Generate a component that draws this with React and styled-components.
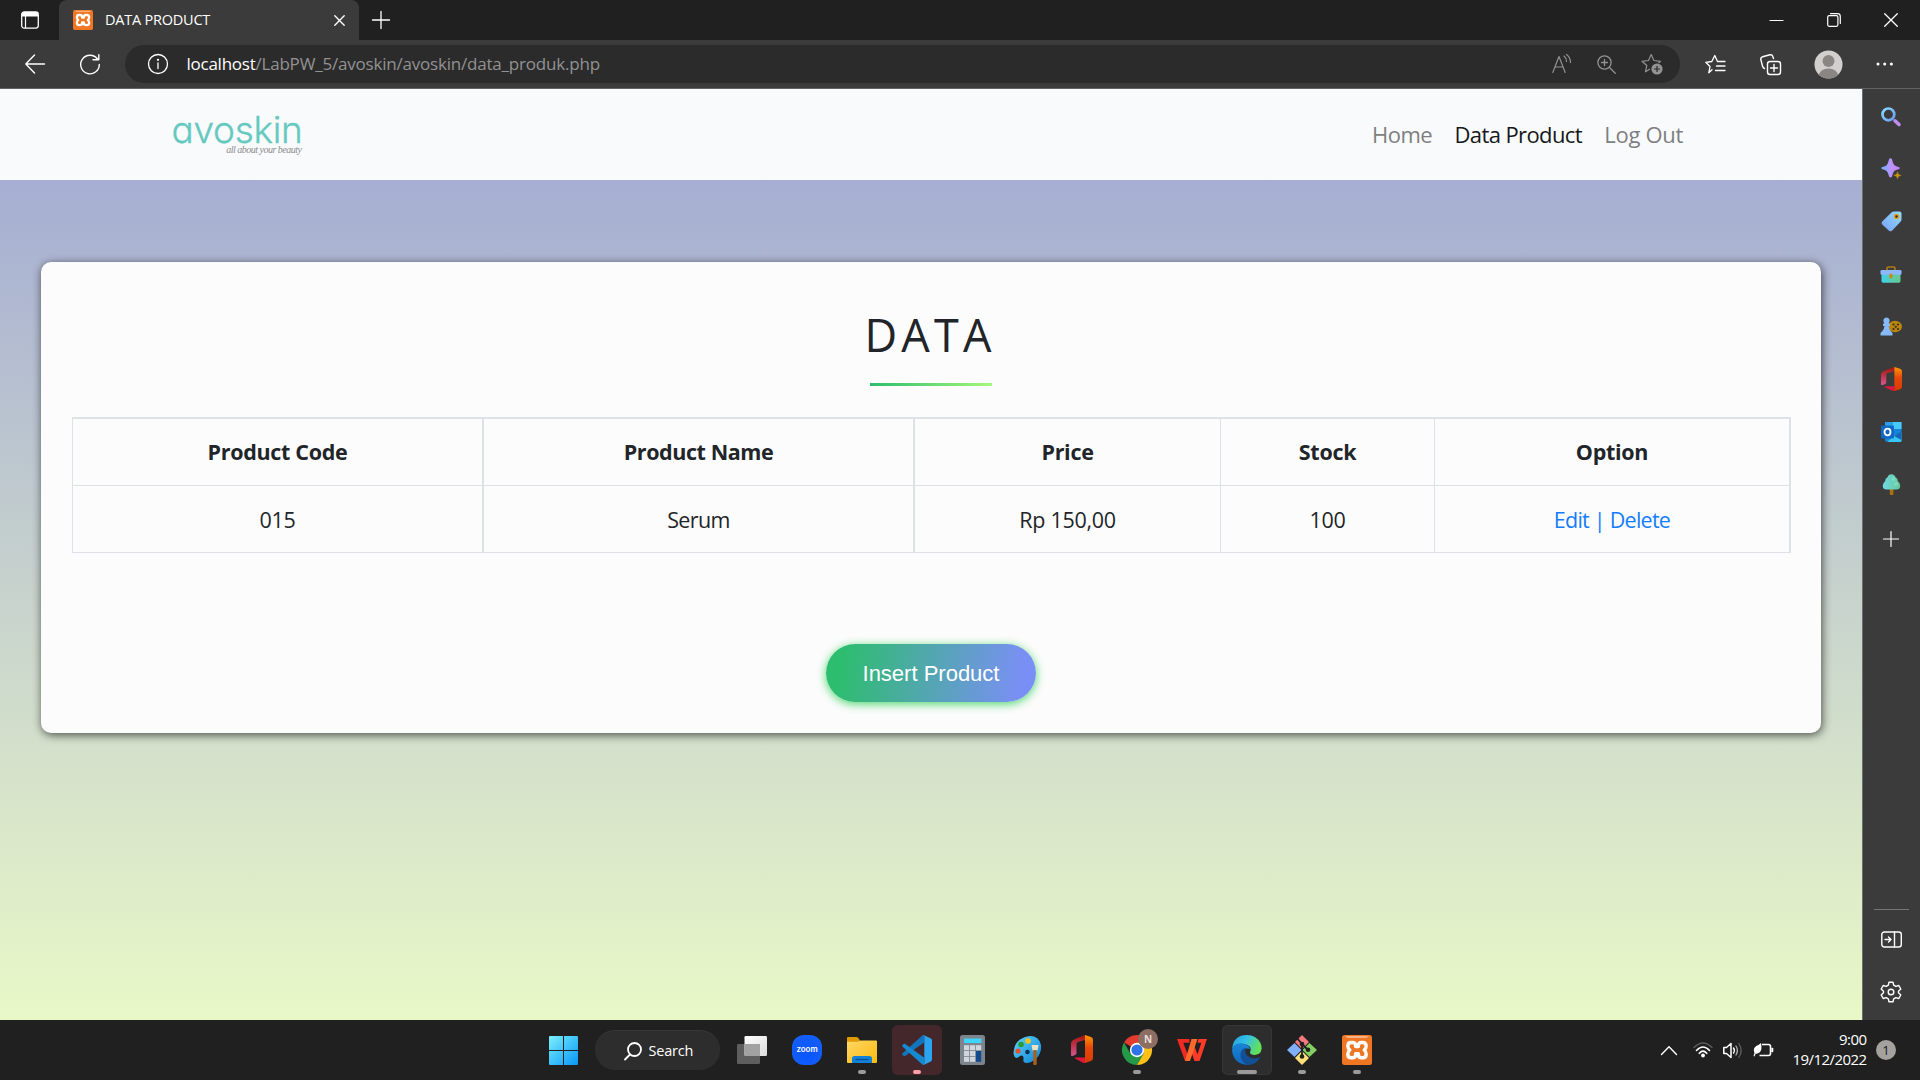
import React from "react";
import styled, { createGlobalStyle, css } from "styled-components";

const UI = '"Open Sans", "Noto Sans", sans-serif';

const Global = createGlobalStyle`
  * { box-sizing: border-box; }
  html, body { margin: 0; padding: 0; width: 1920px; height: 1080px; overflow: hidden; background: #202020; }
  body { font-family: ${UI}; }
  svg { display: block; flex: none; overflow: visible; }
`;

const Desktop = styled.div`
  width: 1920px;
  height: 1080px;
  display: flex;
  flex-direction: column;
`;

/* ---------- tab strip ---------- */
const TabStrip = styled.div`
  height: 40px;
  background: #202020;
  display: flex;
  align-items: stretch;
  color: #fff;
`;
const TabMenu = styled.div`
  width: 59px;
  display: flex;
  align-items: center;
  justify-content: center;
`;
const Tab = styled.div`
  width: 300px;
  background: #3b3b3b;
  border-radius: 8px 8px 0 0;
  display: flex;
  align-items: center;
  padding: 0 14px;
`;
const TabTitle = styled.span`
  margin-left: 12px;
  flex: 1;
  font-size: 14.5px;
  line-height: 20px;
  letter-spacing: -0.22px;
  white-space: nowrap;
`;
const NewTab = styled.div`
  width: 43px;
  display: flex;
  align-items: center;
  justify-content: center;
`;
const WindowButtons = styled.div`
  margin-left: auto;
  display: flex;
`;
const WindowButton = styled.div`
  width: 57.5px;
  display: flex;
  align-items: center;
  justify-content: center;
`;

/* ---------- toolbar ---------- */
const Toolbar = styled.div`
  height: 49px;
  background: #3b3b3b;
  border-bottom: 1px solid #636363;
  display: flex;
  align-items: center;
  color: #fff;
`;
const ToolSlot = styled.div`
  width: ${(p) => p.$w}px;
  display: flex;
  align-items: center;
  justify-content: center;
  flex: none;
`;
const AddressBar = styled.div`
  width: 1555px;
  height: 38px;
  border-radius: 19px;
  background: #2b2b2b;
  display: flex;
  align-items: center;
  padding-left: 21.5px;
  padding-right: 5.5px;
`;
const Url = styled.span`
  margin-left: 18px;
  flex: 1;
  font-size: 17px;
  line-height: 24px;
  letter-spacing: -0.2px;
  white-space: nowrap;
  color: #929292;
`;
const UrlHost = styled.span`
  color: #fff;
  letter-spacing: -0.25px;
`;

/* ---------- web page ---------- */
const Middle = styled.div`
  height: 931px;
  display: flex;
`;
const Page = styled.main`
  width: 1862px;
  display: flex;
  flex-direction: column;
  background: linear-gradient(#9fa6d4, #e9f8c7);
`;
const Navbar = styled.nav`
  height: 91px;
  background: #f8fafc;
  display: flex;
  justify-content: space-between;
  padding: 0 179px 0 171.5px;
`;
const Brand = styled.div`
  display: flex;
  flex-direction: column;
  width: 130px;
  padding-top: 18.5px;
`;
const BrandName = styled.span`
  font-family: Inter, "Open Sans", sans-serif;
  font-feature-settings: "cv11";
  font-weight: 300;
  font-size: 37px;
  line-height: 36px;
  padding-top: 4px;
  letter-spacing: -0.3px;
  color: #65c9c0;
  -webkit-text-stroke: 0.3px #65c9c0;
  white-space: nowrap;
`;
const BrandTag = styled.span`
  margin-top: -4px;
  font-family: "Liberation Serif", serif;
  font-style: italic;
  font-size: 10px;
  line-height: 12px;
  text-align: right;
  letter-spacing: -0.5px;
  color: #8d8d8d;
  white-space: nowrap;
`;
const NavLinks = styled.div`
  display: flex;
  align-items: center;
  gap: 22.3px;
  padding-bottom: 2px;
`;
const NavLink = styled.a`
  font-size: 22px;
  line-height: 30px;
  letter-spacing: ${(p) => p.$ls}px;
  color: ${(p) => (p.$active ? "#16181a" : "#7e7f81")};
  white-space: nowrap;
`;
const Card = styled.section`
  margin: 82px 41px 0;
  height: 471px;
  border-radius: 10px;
  background: #fcfcfc;
  box-shadow: 1px 2px 10px rgba(0, 0, 0, 0.65);
  padding: 43px 31px 0;
  display: flex;
  flex-direction: column;
  align-items: center;
`;
const Title = styled.h1`
  margin: 0 2px 0 0;
  font-weight: 400;
  font-size: 45px;
  line-height: 60px;
  letter-spacing: 4.2px;
  color: #212529;
`;
const Underline = styled.div`
  width: 122px;
  height: 3px;
  margin-top: 18px;
  background: linear-gradient(to right, #2dbd6e, #a6f77b);
`;
const Table = styled.div`
  align-self: stretch;
  margin-top: 31px;
  margin-right: -1px;
  height: 136px;
  display: grid;
  grid-template-columns: 412px 431px 306px 214px 356px;
  grid-template-rows: 68px 67px;
  border-top: 1px solid #dee2e6;
`;
const Cell = styled.div`
  display: flex;
  align-items: center;
  justify-content: center;
  border: 0 solid #dee2e6;
  border-bottom-width: 1px;
  border-top-width: ${(p) => (p.$head ? 1 : 0)}px;
  border-left-width: ${(p) => (p.$first ? 1 : 0)}px;
  border-right-width: ${(p) => p.$right}px;
  padding-bottom: ${(p) => (p.$head ? 1 : 0)}px;
  font-size: 21.5px;
  font-weight: ${(p) => (p.$head ? 700 : 400)};
  letter-spacing: ${(p) => p.$ls}px;
  color: ${(p) => (p.$link ? "#147dff" : "#212529")};
  white-space: pre;
`;
const InsertButton = styled.button`
  margin-top: 91px;
  width: 210px;
  height: 58px;
  flex: none;
  border: 0;
  padding: 1px 0 0;
  border-radius: 29px;
  background: linear-gradient(100deg, #2dbd6e 8%, #7a8ff5 92%);
  box-shadow: 0 2px 10px rgba(14, 201, 60, 0.75);
  color: #fff;
  font-family: "Liberation Sans", Arial, sans-serif;
  font-size: 22px;
`;

/* ---------- sidebar ---------- */
const Sidebar = styled.aside`
  width: 58px;
  background: #3b3b3b;
  border-left: 1px solid #6b6e6b;
  display: flex;
  flex-direction: column;
  align-items: center;
  padding: 1.3px 1px 2px 0;
  color: #fff;
`;
const SideSlot = styled.div`
  height: ${(p) => p.$h || 52.5}px;
  display: flex;
  align-items: center;
  justify-content: center;
`;
const SideDivider = styled.div`
  width: 35px;
  height: 1px;
  background: #767676;
  margin-top: auto;
  margin-bottom: 3px;
`;

/* ---------- taskbar ---------- */
const Taskbar = styled.footer`
  height: 60px;
  background: #202020;
  display: flex;
  align-items: center;
  justify-content: space-between;
  padding-left: 536px;
  padding-right: 24px;
  color: #fff;
`;
const TaskGroup = styled.div`
  display: flex;
  align-items: center;
`;
const TaskSlot = styled.div`
  width: 55px;
  height: 60px;
  display: flex;
  align-items: center;
  justify-content: center;
`;
const TaskTile = styled.div`
  width: 50px;
  height: 50px;
  border-radius: 6px;
  display: flex;
  flex-direction: column;
  align-items: center;
  padding-top: 10px;
  background: ${(p) => p.$bg || "transparent"};
  ${(p) => p.$outlined && css`box-shadow: inset 0 0 0 1px #363636;`}
`;
const Indicator = styled.div`
  width: ${(p) => p.$w || 8}px;
  height: 4px;
  border-radius: 2px;
  margin-top: 5px;
  flex: none;
  background: ${(p) => p.$c || "#9a9a9a"};
`;
const SearchPill = styled.div`
  width: 125px;
  height: 40px;
  margin: 0 4.5px 0 4px;
  border-radius: 20px;
  background: #2d2d2d;
  border-top: 1px solid #383838;
  display: flex;
  align-items: center;
  padding-left: 29px;
  gap: 6.5px;
  font-size: 14.5px;
  letter-spacing: -0.2px;
`;
const Tray = styled.div`
  display: flex;
  align-items: center;
`;
const Clock = styled.div`
  margin-left: 13px;
  width: 74px;
  text-align: right;
  font-size: 15px;
  line-height: 20px;
  letter-spacing: -0.55px;
  white-space: nowrap;
  padding-bottom: 2px;
`;
const Badge = styled.div`
  width: 20px;
  height: 20px;
  border-radius: 50%;
  margin-left: 9.5px;
  background: #a3a29f;
  color: #202020;
  font-size: 13px;
  display: flex;
  align-items: center;
  justify-content: center;
`;

/* ---------- icons ---------- */
const Line = ({ w = 24, h, sw = 1.3, c = "currentColor", children }) => (
  <svg width={w} height={h || w} viewBox={`0 0 ${w} ${h || w}`} fill="none" stroke={c} strokeWidth={sw} strokeLinecap="round" strokeLinejoin="round">
    {children}
  </svg>
);

const Xampp = ({ s }) => (
  <svg width={s} height={s} viewBox="0 0 30 30">
    <rect width="30" height="30" rx="2.5" fill="#ef7622" />
    <path d="M3 1 H27 L24.5 3 H5.5 Z" fill="#f7b184" />
    <path d="M10.5 7.5 H9.2 Q5.8 7.5 5.8 11 Q5.8 13.6 7.8 15 Q5.8 16.6 5.8 19.3 Q5.8 22.8 9.2 22.8 H10.5 Q13.6 22.8 13.6 19.5 V18.6 H16.4 V19.5 Q16.4 22.8 19.5 22.8 H20.8 Q24.2 22.8 24.2 19.3 Q24.2 16.6 22.2 15 Q24.2 13.6 24.2 11 Q24.2 7.5 20.8 7.5 H19.5 Q16.4 7.5 16.4 10.5 V11.5 H13.6 V10.5 Q13.6 7.5 10.5 7.5 Z" fill="none" stroke="#fff" strokeWidth="3.4" strokeLinejoin="round" />
  </svg>
);

const Office = ({ w, h, id }) => (
  <svg width={w} height={h} viewBox="0 0 22 28" preserveAspectRatio="none">
    <defs>
      <linearGradient id={id} x1="0" y1="0" x2="0" y2="1"><stop offset="0" stopColor="#ff9a00" /><stop offset=".45" stopColor="#e8470a" /><stop offset="1" stopColor="#d73b02" /></linearGradient>
      <linearGradient id={id + "b"} x1="0" y1="0" x2="0" y2="1"><stop offset="0" stopColor="#a3150c" /><stop offset="1" stopColor="#d8568f" /></linearGradient>
    </defs>
    <path d="M14 0 L4 4 Q0 5.5 0 9 V20 Q0 21.5 1.5 21 L4 20 Q5.5 19.4 5.5 18 V9 Q5.5 7.5 7 7 L14 5 Z" fill={`url(#${id}b)`} />
    <path d="M14 0 L20 2 Q22 2.7 22 5 V23 Q22 25.3 20 26 L14 28 Z" fill={`url(#${id})`} />
    <path d="M4 22.5 L13 22.5 H14 V28 Q12.5 28 11.5 27.4 L4 23.5 Z" fill="#e0163d" />
  </svg>
);

const SideIcons = [
  <svg width="20" height="20" viewBox="0 0 20 20">
    <defs><linearGradient id="sg" x1="0" y1="0" x2="1" y2="1"><stop offset="0" stopColor="#85dcfb" /><stop offset="1" stopColor="#6d9cf6" /></linearGradient></defs>
    <circle cx="7.4" cy="7.4" r="5.9" fill="none" stroke="url(#sg)" strokeWidth="2.7" />
    <path d="M14 13.8 L18 17.5" stroke="#c08df5" strokeWidth="3.6" strokeLinecap="round" />
  </svg>,
  <svg width="21" height="22" viewBox="0 0 21 22">
    <defs><linearGradient id="sp" x1="0" y1="0" x2="1" y2="0"><stop offset="0" stopColor="#6fb0ff" /><stop offset=".5" stopColor="#b894fb" /><stop offset="1" stopColor="#c97ef7" /></linearGradient></defs>
    <path d="M9.5 .3 Q10.6 .3 11 1.6 Q12 6 13.400 7.200 Q14.800 8.400 18.300 9.300 Q19.300 10.100 18.300 10.900 Q14.500 11.800 13.200 13 Q12 14.200 11 18.500 Q9.500 20.400 8.100 18.500 Q7 14.400 5.700 13.100 Q4.400 11.900 .8 10.900 Q-.2 10.100 .8 9.300 Q4.400 8.400 5.700 7.200 Q7 6 8 1.600 Q8.400 .3 9.500 .3Z" fill="url(#sp)" />
    <path d="M16.5 12.8 L17.9 16 L21.3 17.3 L17.9 18.700 L16.5 22 L15.100 18.700 L11.700 17.3 L15.100 16Z" fill="#c48f12" stroke="#3b3b3b" strokeWidth=".6" />
  </svg>,
  <svg width="21" height="21" viewBox="0 0 21 21">
    <defs><linearGradient id="tg" x1="0" y1="1" x2="1" y2="0"><stop offset="0" stopColor="#7aa0f8" /><stop offset="1" stopColor="#8edcfb" /></linearGradient></defs>
    <path d="M11 1 Q12 .5 13 .5 H18.5 Q20.5 .5 20.5 2.5 V8.5 Q20.5 9.7 19.7 10.5 L11 19.7 Q9.5 21 8 19.7 L1.2 13.5 Q-.2 12 1.2 10.5Z" fill="url(#tg)" />
    <circle cx="15.5" cy="5.5" r="2" fill="#203040" stroke="#f29a0c" strokeWidth="1.5" />
  </svg>,
  <svg width="22" height="17" viewBox="0 0 22 17">
    <defs><linearGradient id="bx" x1="0" y1="0" x2="1" y2="0"><stop offset="0" stopColor="#3fd0ea" /><stop offset="1" stopColor="#68c98c" /></linearGradient></defs>
    <path d="M7 5 V2.5 Q7 1 8.5 1 H13.5 Q15 1 15 2.5 V5" fill="none" stroke="#b07a12" strokeWidth="1.7" />
    <path d="M1.5 7 H20.5 V15 Q20.5 16.8 19 16.8 H3 Q1.5 16.8 1.5 15Z" fill="url(#bx)" />
    <rect x=".5" y="4" width="21" height="4.8" rx="1.2" fill="#8db7fb" />
    <rect x="9.3" y="7.6" width="3.4" height="4.8" rx="1.5" fill="#c48f12" />
  </svg>,
  <svg width="22" height="19" viewBox="0 0 22 19">
    <ellipse cx="15" cy="9.5" rx="7" ry="5.8" fill="#b8860f" />
    <g fill="#3b3210"><circle cx="13.5" cy="7.5" r="1.1" /><circle cx="18" cy="7.5" r="1.1" /><circle cx="15.8" cy="9.8" r="1.1" /><circle cx="13.5" cy="12" r="1.1" /><circle cx="18" cy="12" r="1.1" /></g>
    <path d="M6.5 .5 A3.2 3.2 0 0 1 8.7 6 L10 7 V9 H8.5 Q8.8 12 11 14.5 L12.5 16 V18.5 H.5 V16 L2 14.5 Q4.3 12 4.5 9 H3 V7 L4.3 6 A3.2 3.2 0 0 1 6.5 .5Z" fill="#86b9fa" />
  </svg>,
  <Office w={21} h={24} id="so" />,
  <svg width="21" height="20" viewBox="0 0 21 20">
    <rect x="4" y="0" width="16.5" height="19.5" rx="1" fill="#1683d8" />
    <rect x="4" y="0" width="8" height="7" fill="#2ba0ea" /><rect x="12" y="0" width="8.5" height="7" fill="#46c8fa" />
    <path d="M13 14 L20.5 10 V19 Q20.5 20 19 20 H6 Z" fill="#38c6f7" /><path d="M13 14 L20.5 9.5 V18Z" fill="#1566b5" />
    <rect x="0" y="3.5" width="13" height="13" rx="1.2" fill="#0f69c3" />
    <ellipse cx="6.5" cy="10" rx="3" ry="3.3" fill="none" stroke="#fff" strokeWidth="1.8" />
  </svg>,
  <svg width="19" height="21" viewBox="0 0 19 21">
    <defs><linearGradient id="tr" x1="0" y1="0" x2="1" y2="0"><stop offset="0" stopColor="#6fdbe8" /><stop offset="1" stopColor="#63c795" /></linearGradient></defs>
    <rect x="7.8" y="14" width="3.6" height="7" rx="1" fill="#a9720f" />
    <path d="M9.5 .3 Q12.5 .3 13.5 3.3 Q16 4.5 15.8 7.3 Q18.5 9 18.3 12 Q17.8 15.5 14.5 15.6 H4.5 Q1 15.5 .7 12 Q.7 9 3.2 7.3 Q3 4.5 5.5 3.3 Q6.5 .3 9.5 .3Z" fill="url(#tr)" />
    <circle cx="11.5" cy="5" r="2" fill="#8fe5cb" opacity=".6" /><circle cx="14" cy="10" r="2.2" fill="#8fe5cb" opacity=".5" />
  </svg>,
  <Line w={16} sw={1.2}><path d="M8 .5V15.5M.5 8H15.5" /></Line>,
];

const WinLogo = (
  <svg width="29" height="29" viewBox="0 0 29 29">
    <defs><linearGradient id="wl" gradientUnits="userSpaceOnUse" x1="0" y1="0" x2="29" y2="29"><stop offset="0" stopColor="#7cf0fc" /><stop offset=".5" stopColor="#3fc2fb" /><stop offset="1" stopColor="#0a96f5" /></linearGradient></defs>
    <path d="M0 1 Q0 0 1 0H14V14H0Z M15 0H28Q29 0 29 1V14H15Z M0 15H14V29H1Q0 29 0 28Z M15 15H29V28Q29 29 28 29H15Z" fill="url(#wl)" />
  </svg>
);
const TaskView = (
  <svg width="30" height="28" viewBox="0 0 30 28">
    <defs><linearGradient id="tv" x1="0" y1="0" x2="1" y2="1"><stop offset="0" stopColor="#fff" /><stop offset="1" stopColor="#dcdcdc" /></linearGradient></defs>
    <rect x="0" y="8" width="23" height="20" rx="1.2" fill="#5e5e5e" />
    <rect x="7.5" y="0" width="22.5" height="20" rx="1.2" fill="url(#tv)" />
    <path d="M7.5 8H23V20H8.5Q7.5 20 7.5 19Z" fill="#a2a2a2" />
  </svg>
);
const ZoomLogo = styled.div`
  width: 30px;
  height: 30px;
  border-radius: 12px;
  background: radial-gradient(circle at 50% 60%, #0a55ff, #1762f5);
  color: #fff;
  font: 600 8px/28px Inter, sans-serif;
  letter-spacing: -0.05px;
  text-align: center;
`;
const Folder = (
  <svg width="30" height="30" viewBox="0 0 30 30">
    <defs><linearGradient id="fo" x1="0" y1="0" x2="1" y2="1"><stop offset="0" stopColor="#ffd866" /><stop offset="1" stopColor="#fbb90c" /></linearGradient></defs>
    <path d="M0 8V3Q0 2 1 2H9.5Q10.5 2 11.3 3L13 5.5V9Z" fill="#dd9b04" />
    <path d="M0 6.8H11L13.5 5.4H29Q30 5.4 30 6.4V27Q30 28 29 28H1Q0 28 0 27Z" fill="url(#fo)" />
    <path d="M5 28V23.5Q5 21 7.5 21H22.5Q25 21 25 23.5V28Z" fill="#1180d6" />
    <path d="M8.5 24.5H21.5" stroke="#0a4f93" strokeWidth="1.2" />
  </svg>
);
const VSCode = (
  <svg width="30" height="30" viewBox="0 0 30 30">
    <path d="M20 .7 L.6 18.2 Q-.3 19.1 .6 20 L1.6 20.9 Q2.3 21.5 3.2 20.9 L22 7.5 V.3 Z" fill="#1274bd" />
    <path d="M20 29.3 L.6 11.8 Q-.3 10.9 .6 10 L1.6 9.1 Q2.3 8.5 3.2 9.1 L22 22.5 V29.7 Z" fill="#158ad3" />
    <path d="M20 .7 Q20.8 -.2 22 .3 L28.9 3.6 Q30 4.2 30 5.4 V24.6 Q30 25.8 28.9 26.4 L22 29.7 Q20.8 30.2 20 29.3 Q22.3 30.5 22.3 28 V2 Q22.3 -.5 20 .7Z" fill="#2ba4ef" />
  </svg>
);
const Calc = (
  <svg width="25" height="30" viewBox="0 0 25 30">
    <rect width="25" height="30" rx="2.5" fill="#7c848d" />
    <rect x="4" y="3.5" width="17.5" height="4.5" fill="#3fd4fb" />
    <g fill="#cfd6dd">
      {[10.2, 16, 21.8].map((y) => [4, 10, 16].map((x) => (x === 16 && y > 11 ? null : <rect key={x + "-" + y} x={x} y={y} width="5.2" height="5" />)))}
    </g>
    <rect x="16" y="16" width="5.2" height="10.8" fill="#134a8c" />
  </svg>
);
const Paint = (
  <svg width="29" height="30" viewBox="0 0 29 30">
    <defs><linearGradient id="pa" x1="0" y1="0" x2="1" y2="1"><stop offset="0" stopColor="#5fd6fb" /><stop offset="1" stopColor="#0c82d9" /></linearGradient></defs>
    <path d="M17 1 Q26 1 28 10 Q29 18 23 24 Q17 28.5 13 28 Q9.5 27.5 10.5 24 Q11 20 8 20.5 L4 23 Q1 23 .5 18 Q1 9 7 4.5 Q12 1 17 1Z" fill="url(#pa)" />
    <circle cx="15" cy="6" r="2.8" fill="#f7c21b" /><circle cx="8" cy="9.5" r="2.8" fill="#2b9c2f" /><circle cx="5" cy="16" r="2.6" fill="#e5532c" /><circle cx="14.5" cy="17" r="2.3" fill="#10324f" />
    <path d="M18.5 10H25.5L24.5 15.5H19.5Z" fill="#efe0c4" /><rect x="20.3" y="15" width="3.4" height="15" rx="1" fill="#a8611c" />
  </svg>
);
const ProfileInitial = styled.text`
  font: 700 10px "Open Sans", sans-serif;
  fill: #e8dfdb;
`;
const Chrome = (
  <svg width="30" height="30" viewBox="0 0 30 30">
    <path d="M2 7.5 A15 15 0 0 1 28 7.5 H15 L15 15Z" fill="#e33b2e" />
    <path d="M2 7.5 A15 15 0 0 0 15 30 L21.5 18.7 L15 15 L8.5 18.7Z" fill="#249a48" />
    <path d="M28 7.5 A15 15 0 0 1 15 30 L21.5 18.7 Q23 12 15 7.5Z" fill="#fbc116" />
    <circle cx="15" cy="15" r="7.2" fill="#fff" /><circle cx="15" cy="15" r="5.6" fill="#2f73e8" />
    <circle cx="26" cy="4" r="10" fill="#8d6e63" />
    <ProfileInitial x="26" y="7.6" textAnchor="middle">N</ProfileInitial>
  </svg>
);
const Wps = (
  <svg width="30" height="30" viewBox="0 0 30 30">
    <path d="M0 4 H12.5 V7.8 H6.3 L10.5 19 L9.5 26 H8 Z" fill="#f02a22" />
    <path d="M30 4 L22.5 26 H17.5 L14.5 17.5 L17 10 L20.5 19.5 L24.3 7.8 H20.5 L21.5 4 Z" fill="#ff3a26" />
    <path d="M14.5 4 H20.5 L13 26 H8 Z" fill="#ff6a2b" />
  </svg>
);
const Edge = (
  <svg width="30" height="30" viewBox="0 0 30 30">
    <defs>
      <linearGradient id="e1" x1="0" y1="0" x2="1" y2=".4"><stop offset="0" stopColor="#1f9fe0" /><stop offset=".5" stopColor="#35c1e6" /><stop offset="1" stopColor="#63e05a" /></linearGradient>
      <linearGradient id="e2" x1="0" y1="0" x2="0" y2="1"><stop offset="0" stopColor="#1a86d8" /><stop offset="1" stopColor="#0f68bd" /></linearGradient>
    </defs>
    <path d="M.2 13.5 Q1.5 0 15 0 Q24 0 28.5 8 Q31.5 15 27 18.8 Q23 21 18.8 19 Q17.3 18 18.3 16.5 Q20 12 15.5 10 Q6 6.5 .2 13.5Z" fill="url(#e1)" />
    <path d="M0 15 Q1 8.3 8.5 8.3 Q16 8.3 18.5 14.5 Q16.5 13 14.5 13.5 Q12 14 12.5 17 Q13 22 17.5 30 Q1 29.5 0 15Z" fill="url(#e2)" />
    <path d="M14 12.7 Q12 17 15.5 20.8 Q20.5 25.5 28.3 22 Q24.3 30 15.5 30 Q7.5 26 8.5 18.5 Q9.5 13.5 14 12.7Z" fill="#124f94" />
  </svg>
);
const Git = (
  <svg width="30" height="30" viewBox="0 0 30 30">
    <path d="M15 0 L22 7 L15 14 L8 7Z" fill="#f5797c" /><path d="M7.5 8 L14.5 15 L7.5 22 L0 15Z" fill="#81b0fb" />
    <path d="M22.5 8 L30 15 L22.5 22 L15.5 15Z" fill="#85cf62" /><path d="M15 16 L22 23 L15 30 L8 23Z" fill="#fbe078" />
    <path d="M10 3 L15 9 V21 M15 9 L20.5 14.5" stroke="#202020" strokeWidth="1.8" fill="none" />
    <circle cx="15" cy="9" r="2.3" fill="#202020" /><circle cx="15" cy="21.5" r="2.3" fill="#202020" /><circle cx="21" cy="14.8" r="2.3" fill="#202020" />
  </svg>
);

const TASKS = [
  { icon: <ZoomLogo>zoom</ZoomLogo> },
  { icon: Folder, run: true },
  { icon: VSCode, run: true, bg: "#44272a", c: "#ff9ea6" },
  { icon: Calc },
  { icon: Paint },
  { icon: <Office w={22} h={28} id="to" /> },
  { icon: Chrome, run: true },
  { icon: Wps },
  { icon: Edge, run: true, bg: "#2d2d2d", w: 20, outlined: true },
  { icon: Git, run: true },
  { icon: <Xampp s={30} />, run: true },
];

const HEAD = [
  { t: "Product Code", ls: -0.3 },
  { t: "Product Name", ls: -0.42 },
  { t: "Price", ls: -0.3 },
  { t: "Stock", ls: -0.3 },
  { t: "Option", ls: -0.3 },
];
const ROW = [
  { t: "015", ls: -0.3 },
  { t: "Serum", ls: -0.6 },
  { t: "Rp 150,00", ls: -0.3 },
  { t: "100", ls: -0.3 },
  { t: "Edit | Delete", ls: -0.75, link: true },
];
const RIGHT = [2, 2, 1, 1, 2];

export default function App() {
  return (
    <Desktop>
      <Global />
      <TabStrip>
        <TabMenu>
          <svg width="18" height="18" viewBox="0 0 18 18"><rect x=".7" y=".9" width="16.6" height="16.2" rx="2.5" fill="none" stroke="#fff" strokeWidth="1.3" /><path d="M1 5.5V3.5Q1 1 3.5 1H14.5Q17 1 17 3.5V5.5Z" fill="#fff" /><path d="M4.5 5V17" stroke="#fff" strokeWidth="1.2" /></svg>
        </TabMenu>
        <Tab>
          <Xampp s={20} />
          <TabTitle>DATA PRODUCT</TabTitle>
          <Line w={11} sw={1.4}><path d="M.8 .8L10.2 10.2M10.2 .8L.8 10.2" /></Line>
        </Tab>
        <NewTab><Line w={18} sw={1.3}><path d="M9 .5V17.5M.5 9H17.5" /></Line></NewTab>
        <WindowButtons>
          <WindowButton><Line w={13} sw={1.2}><path d="M0 6.5H13" /></Line></WindowButton>
          <WindowButton><Line w={14} sw={1.2}><rect x=".7" y="2.7" width="10.2" height="10.6" rx="1.5" /><path d="M3.5 .6H10.5Q13.3 .6 13.3 3.4V10.5" /></Line></WindowButton>
          <WindowButton><Line w={14} sw={1.3}><path d="M.7 .7L13.3 13.3M13.3 .7L.7 13.3" /></Line></WindowButton>
        </WindowButtons>
      </TabStrip>

      <Toolbar>
        <ToolSlot $w={69}><Line w={20} sw={1.4}><path d="M9.5 1L.8 10L9.5 19M.8 10H19.5" /></Line></ToolSlot>
        <ToolSlot $w={41}><Line w={20} sw={1.4}><path d="M17.5 5A9.3 9.3 0 1 0 19.3 10.5M18.8 .8V5.8H13" /></Line></ToolSlot>
        <ToolSlot $w={15} />
        <AddressBar>
          <Line w={22} sw={1.3}><circle cx="11" cy="11" r="9.5" /><path d="M11 10V15.5" /><circle cx="11" cy="6.8" r=".5" fill="#fff" /></Line>
          <Url><UrlHost>localhost</UrlHost>/LabPW_5/avoskin/avoskin/data_produk.php</Url>
          <ToolSlot $w={44}>
            <Line w={20} sw={1.2} c="#929292"><path d="M.8 18.500L7 2.500L13.2 18.500M3 13H11M12 2Q14.5 4 14.5 7.5M14.5 .5Q18.5 3.5 18.5 8.5" /></Line>
          </ToolSlot>
          <ToolSlot $w={45}>
            <Line w={19} sw={1.3} c="#929292"><circle cx="7.5" cy="7.5" r="6.6" /><path d="M12.5 12.5L18.3 18.3M7.5 4.5V10.5M4.5 7.5H10.5" /></Line>
          </ToolSlot>
          <ToolSlot $w={46}>
            <svg width="22" height="22" viewBox="0 0 22 22"><path d="M9 16L4.5 18.8L5.8 12.5L1 8.3L7.5 7.5L10.2 1.5L12.9 7.5L19.5 8.3L17.5 10" fill="none" stroke="#929292" strokeWidth="1.2" strokeLinejoin="round" /><circle cx="16" cy="16" r="5.6" fill="#929292" /><path d="M16 13V19M13 16H19" stroke="#2b2b2b" strokeWidth="1.2" /></svg>
          </ToolSlot>
        </AddressBar>
        <ToolSlot $w={7} />
        <ToolSlot $w={56}><Line w={21} sw={1.3}><path d="M7 15.8L3.8 18.8L5 12.5L.8 8.3L6.8 7.5L9.8 1.5L12.5 7.5H20M11.5 12H20M10.5 16.5H20" /></Line></ToolSlot>
        <ToolSlot $w={54}><Line w={21} sw={1.4}><rect x="7.5" y="7.5" width="13" height="13" rx="2.5" /><path d="M14 10.5V17.5M10.5 14H17.5M4.5 14.5Q3 14 2.5 12L.8 5.5Q.5 3.5 2.5 2.8L10 .8Q12.3 .5 12.8 2.5L13.5 4.5" /></Line></ToolSlot>
        <ToolSlot $w={62}>
          <svg width="29" height="29" viewBox="0 0 29 29"><defs><clipPath id="av"><circle cx="14.5" cy="14.5" r="14" /></clipPath></defs><circle cx="14.5" cy="14.5" r="14" fill="#d2d0ce" /><g clipPath="url(#av)"><circle cx="14.5" cy="11" r="6" fill="#8a8684" /><ellipse cx="14.5" cy="26.5" rx="10" ry="8" fill="#8a8684" /></g></svg>
        </ToolSlot>
        <ToolSlot $w={52}><svg width="18" height="4" viewBox="0 0 18 4" fill="#fff"><circle cx="2" cy="2" r="1.5" /><circle cx="8.7" cy="2" r="1.5" /><circle cx="15.4" cy="2" r="1.5" /></svg></ToolSlot>
      </Toolbar>

      <Middle>
        <Page>
          <Navbar>
            <Brand><BrandName>avoskin</BrandName><BrandTag>all about your beauty</BrandTag></Brand>
            <NavLinks>
              <NavLink $ls={-0.5}>Home</NavLink>
              <NavLink $ls={-0.6} $active>Data Product</NavLink>
              <NavLink $ls={-0.3}>Log Out</NavLink>
            </NavLinks>
          </Navbar>
          <Card>
            <Title>DATA</Title>
            <Underline />
            <Table>
              {HEAD.map((h, i) => <Cell key={h.t} $head $first={i === 0} $right={RIGHT[i]} $ls={h.ls}>{h.t}</Cell>)}
              {ROW.map((r, i) => <Cell key={r.t} $first={i === 0} $right={RIGHT[i]} $ls={r.ls} $link={r.link}>{r.t}</Cell>)}
            </Table>
            <InsertButton>Insert Product</InsertButton>
          </Card>
        </Page>
        <Sidebar>
          {SideIcons.map((icon, i) => <SideSlot key={i} $h={i === 8 ? 58 : undefined}>{icon}</SideSlot>)}
          <SideDivider />
          <SideSlot><Line w={21} h={17} sw={1.4}><rect x=".8" y="1" width="19.5" height="15" rx="2.5" /><path d="M13.5 1V16M4 8.5H10M7.5 6L10 8.5L7.5 11" /></Line></SideSlot>
          <SideSlot>
            <Line w={22} sw={1.4}><circle cx="11" cy="11" r="2.8" /><path d="M9 1.2H13L13.7 4.2L15.8 5.4L18.8 4.5L20.8 8L18.5 10.2V11.8L20.8 14L18.8 17.5L15.8 16.6L13.7 17.8L13 20.8H9L8.3 17.8L6.2 16.6L3.2 17.5L1.2 14L3.5 11.8V10.2L1.2 8L3.2 4.5L6.2 5.4L8.3 4.2Z" /></Line>
          </SideSlot>
        </Sidebar>
      </Middle>

      <Taskbar>
        <TaskGroup>
          <TaskSlot>{WinLogo}</TaskSlot>
          <SearchPill>
            <Line w={18} sw={1.8}><circle cx="10.5" cy="7.5" r="6.5" /><path d="M6 12.5L1 17.5" /></Line>
            Search
          </SearchPill>
          <TaskSlot>{TaskView}</TaskSlot>
          {TASKS.map((t, i) => (
            <TaskSlot key={i}>
              <TaskTile $bg={t.bg} $outlined={t.outlined}>{t.icon}{t.run && <Indicator $w={t.w} $c={t.c} />}</TaskTile>
            </TaskSlot>
          ))}
        </TaskGroup>
        <Tray>
          <ToolSlot $w={36}><Line w={16} h={9} sw={1.4}><path d="M.5 8.5L8 .8L15.5 8.5" /></Line></ToolSlot>
          <ToolSlot $w={32}>
            <svg width="20" height="16" viewBox="0 0 20 16" fill="none" strokeLinecap="round"><path d="M1 5.5Q10 -3.5 19 5.5" stroke="#5c5c5c" strokeWidth="1.4" /><path d="M3.5 8.5Q10 1.5 16.5 8.5M6.3 11.3Q10 7 13.7 11.3" stroke="#fff" strokeWidth="1.6" /><circle cx="10" cy="13.5" r="1.9" fill="#fff" /></svg>
          </ToolSlot>
          <ToolSlot $w={29}>
            <svg width="20" height="17" viewBox="0 0 20 17" fill="none" strokeLinecap="round" strokeLinejoin="round"><path d="M.8 5.5H3.5L8 1.5V15.5L3.5 11.5H.8Z" stroke="#fff" strokeWidth="1.5" /><path d="M10.5 6Q12.3 8.5 10.5 11" stroke="#fff" strokeWidth="1.4" /><path d="M13 4Q15.8 8.5 13 13" stroke="#aaa" strokeWidth="1.3" /><path d="M15.8 1.5Q20.5 8.5 15.8 15.5" stroke="#5c5c5c" strokeWidth="1.3" /></svg>
          </ToolSlot>
          <ToolSlot $w={32}>
            <svg width="21" height="16" viewBox="0 0 21 16"><path d="M9 2.5H15.5Q17.5 2.5 17.5 4.5V11.5Q17.5 13.5 15.5 13.5H6.5" fill="none" stroke="#fff" strokeWidth="1.6" /><rect x="18.3" y="5.8" width="2" height="4.5" rx=".8" fill="#fff" /><path d="M8 1Q9.500 8 6.500 10.5Q4.500 12 2.800 11.5L1.5 14.5L.5 14L1.5 11Q-.5 6.5 3.2 4Q6 3 8 1Z" fill="#fff" /></svg>
          </ToolSlot>
          <Clock>9:00<br />19/12/2022</Clock>
          <Badge>1</Badge>
        </Tray>
      </Taskbar>
    </Desktop>
  );
}
